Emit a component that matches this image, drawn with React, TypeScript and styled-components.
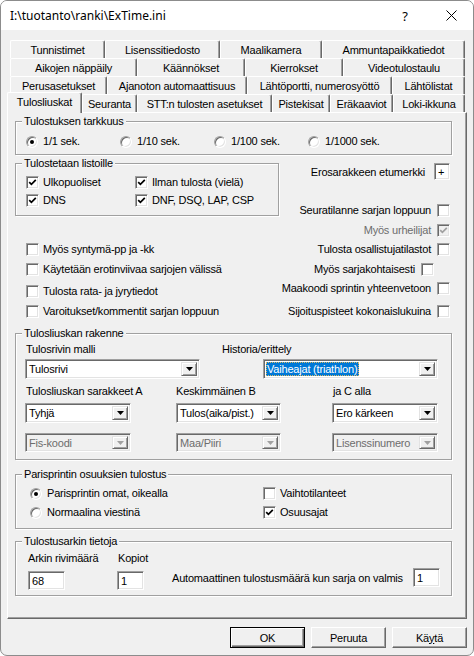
import React from "react";
import styled, { createGlobalStyle } from "styled-components";

const GlobalStyle = createGlobalStyle`
  html, body { margin: 0; padding: 0; background: #ffffff; }
  body {
    font-family: "Liberation Sans", Arial, sans-serif;
    font-size: 11px;
    letter-spacing: -0.2px;
    color: #000;
  }
  * { box-sizing: border-box; }
`;

const Window = styled.div`
  width: 474px;
  height: 656px;
  border: 1px solid #8c8c8c;
  border-radius: 7px;
  overflow: hidden;
  display: flex;
  flex-direction: column;
  background: #f0f0f0;
`;

const TitleBar = styled.div`
  height: 29px;
  flex: none;
  background: #ffffff;
  display: flex;
  align-items: center;
  padding-left: 9px;
  font-family: "Noto Sans", "Liberation Sans", sans-serif;
  font-size: 12px;
  letter-spacing: 0;
`;

const TitleText = styled.div`
  flex: 1;
  white-space: nowrap;
`;

const CaptionButton = styled.div<{ $w: number }>`
  width: ${(p) => p.$w}px;
  height: 29px;
  display: flex;
  align-items: center;
  justify-content: center;
  font-size: 13px;
`;

const Body = styled.div`
  flex: 1;
  display: flex;
  flex-direction: column;
  padding: 10px 6px 0 6px;
`;

const TabRows = styled.div`
  display: flex;
  flex-direction: column;
`;

const TabRow = styled.div<{ $offset: number }>`
  display: flex;
  height: 18px;
  align-items: flex-end;
  margin-left: ${(p) => p.$offset}px;
`;

const Tab = styled.div<{ $w: number; $active?: boolean }>`
  flex: none;
  width: ${(p) => p.$w}px;
  height: ${(p) => (p.$active ? 21 : 18)}px;
  margin-bottom: ${(p) => (p.$active ? -1 : 0)}px;
  padding-bottom: ${(p) => (p.$active ? 2 : 0)}px;
  position: relative;
  z-index: ${(p) => (p.$active ? 2 : 1)};
  background: #f0f0f0;
  border-top: 1px solid #ffffff;
  border-left: 1px solid #ffffff;
  border-right: 1px solid #696969;
  border-radius: 2px 2px 0 0;
  box-shadow: inset -1px 0 0 #a0a0a0;
  display: flex;
  align-items: center;
  justify-content: center;
  white-space: nowrap;
`;

const Panel = styled.div`
  height: 507px;
  flex: none;
  border: 1px solid;
  border-color: #ffffff #696969 #696969 #ffffff;
  box-shadow: inset -1px -1px 0 #a0a0a0;
  padding: 8px 14px 0 7px;
  display: flex;
  flex-direction: column;
  position: relative;
  z-index: 1;
`;

const Group = styled.div<{ $h: number; $w?: number; $mt?: number; $pt: number; $pl: number }>`
  position: relative;
  flex: none;
  height: ${(p) => p.$h}px;
  width: ${(p) => (p.$w ? `${p.$w}px` : "auto")};
  margin-top: ${(p) => p.$mt ?? 0}px;
  border: 1px solid #a0a0a0;
  box-shadow: inset 1px 1px 0 #ffffff, 1px 1px 0 #ffffff;
  padding: ${(p) => p.$pt}px 0 0 ${(p) => p.$pl}px;
`;

const Legend = styled.span`
  position: absolute;
  top: -7px;
  left: 6px;
  padding: 0 2px;
  line-height: 13px;
  background: #f0f0f0;
  white-space: nowrap;
`;

const Row = styled.div<{ $mt?: number; $gap?: number }>`
  display: flex;
  align-items: center;
  margin-top: ${(p) => p.$mt ?? 0}px;
  gap: ${(p) => p.$gap ?? 0}px;
`;

const Item = styled.label<{ $w?: number; $mt?: number; $mr?: number; $disabled?: boolean }>`
  display: flex;
  align-items: center;
  height: 13px;
  flex: none;
  width: ${(p) => (p.$w ? `${p.$w}px` : "auto")};
  margin-top: ${(p) => p.$mt ?? 0}px;
  margin-right: ${(p) => p.$mr ?? 0}px;
  white-space: nowrap;
  line-height: 13px;
  color: ${(p) => (p.$disabled ? "#6d6d6d" : "#000")};
`;

const BoxLeft = styled.span<{ $gap: number }>`
  margin-right: ${(p) => p.$gap}px;
  display: flex;
`;

const BoxRight = styled.span`
  margin-left: 6px;
  display: flex;
`;

const CheckBox = styled.span<{ $disabled?: boolean }>`
  width: 13px;
  height: 13px;
  flex: none;
  border: 1px solid;
  border-color: #a0a0a0 #ffffff #ffffff #a0a0a0;
  box-shadow: inset 1px 1px 0 #696969, inset -1px -1px 0 #e3e3e3;
  background: ${(p) => (p.$disabled ? "#f0f0f0" : "#ffffff")};
  display: flex;
  align-items: center;
  justify-content: center;
`;

const RadioCircle = styled.span`
  width: 12px;
  height: 12px;
  flex: none;
  border-radius: 50%;
  border: 1px solid;
  border-color: #a0a0a0 #ffffff #ffffff #a0a0a0;
  box-shadow: inset 1px 1px 0 #696969, inset -1px -1px 0 #e3e3e3;
  background: #ffffff;
  display: flex;
  align-items: center;
  justify-content: center;
`;

const Dot = styled.span`
  width: 4px;
  height: 4px;
  border-radius: 50%;
  background: #000;
`;

const Check: React.FC<{ checked?: boolean; disabled?: boolean }> = ({ checked, disabled }) => (
  <CheckBox $disabled={disabled}>
    {checked && (
      <svg width="9" height="9" viewBox="0 0 9 9">
        <polyline
          points="1.2,4.2 3.4,6.4 7.8,1.8"
          fill="none"
          stroke={disabled ? "#a0a0a0" : "#000"}
          strokeWidth="1.7"
        />
      </svg>
    )}
  </CheckBox>
);

const Radio: React.FC<{ checked?: boolean }> = ({ checked }) => (
  <RadioCircle>{checked && <Dot />}</RadioCircle>
);

const Columns = styled.div<{ $mt: number }>`
  display: flex;
  margin-top: ${(p) => p.$mt}px;
`;

const LeftCol = styled.div`
  width: 264px;
  flex: none;
  display: flex;
  flex-direction: column;
`;

const LeftList = styled.div`
  display: flex;
  flex-direction: column;
  padding-left: 11px;
`;

const RightCol = styled.div`
  flex: 1;
  display: flex;
  flex-direction: column;
  align-items: flex-end;
  padding-right: 2px;
`;

const EroRow = styled.div`
  display: flex;
  align-items: center;
  height: 17px;
  gap: 9px;
  white-space: nowrap;
`;

const TextBox = styled.div<{ $w: number; $h: number }>`
  width: ${(p) => p.$w}px;
  height: ${(p) => p.$h}px;
  flex: none;
  border: 1px solid;
  border-color: #a0a0a0 #ffffff #ffffff #a0a0a0;
  box-shadow: inset 1px 1px 0 #696969, inset -1px -1px 0 #e3e3e3;
  background: #ffffff;
  display: flex;
  align-items: center;
  padding-left: 3px;
  white-space: nowrap;
`;

const GridRow = styled.div<{ $cols: string; $mt?: number; $pl?: number }>`
  display: grid;
  grid-template-columns: ${(p) => p.$cols};
  margin-top: ${(p) => p.$mt ?? 0}px;
  padding-left: ${(p) => p.$pl ?? 0}px;
  align-items: center;
`;

const FieldLabel = styled.div`
  line-height: 13px;
  height: 13px;
  white-space: nowrap;
`;

const ComboBox = styled.div<{ $w: number; $h: number; $disabled?: boolean }>`
  width: ${(p) => p.$w}px;
  height: ${(p) => p.$h}px;
  border: 1px solid;
  border-color: #a0a0a0 #ffffff #ffffff #a0a0a0;
  box-shadow: inset 1px 1px 0 #696969, inset -1px -1px 0 #e3e3e3;
  background: ${(p) => (p.$disabled ? "#f0f0f0" : "#ffffff")};
  color: ${(p) => (p.$disabled ? "#6d6d6d" : "#000")};
  display: flex;
  align-items: stretch;
  padding: 2px;
`;

const ComboText = styled.div`
  flex: 1;
  display: flex;
  align-items: center;
  padding-left: 1px;
  white-space: nowrap;
  overflow: hidden;
`;

const Selected = styled.span`
  display: flex;
  align-items: center;
  height: 100%;
  margin-left: -1px;
  padding: 0 2px 0 1px;
  background: #0078d7;
  color: #ffffff;
  outline: 1px dotted #d8b864;
  outline-offset: -1px;
`;

const DropButton = styled.div`
  width: 16px;
  flex: none;
  background: #f0f0f0;
  border: 1px solid;
  border-color: #e3e3e3 #696969 #696969 #e3e3e3;
  box-shadow: inset 1px 1px 0 #ffffff, inset -1px -1px 0 #a0a0a0;
  display: flex;
  align-items: center;
  justify-content: center;
`;

const Combo: React.FC<{ w: number; h?: number; text: string; disabled?: boolean; selected?: boolean }> = ({
  w,
  h = 20,
  text,
  disabled,
  selected,
}) => (
  <ComboBox $w={w} $h={h} $disabled={disabled}>
    <ComboText>{selected ? <Selected>{text}</Selected> : text}</ComboText>
    <DropButton>
      <svg width="7" height="4" viewBox="0 0 7 4">
        <polygon points="0,0 7,0 3.5,4" fill={disabled ? "#a0a0a0" : "#000"} />
      </svg>
    </DropButton>
  </ComboBox>
);

const TwoColGrid = styled.div`
  display: grid;
  grid-template-columns: 233px auto;
  row-gap: 6px;
`;

const SheetRow = styled.div`
  display: flex;
  align-items: flex-start;
`;

const SheetCol = styled.div<{ $w: number }>`
  width: ${(p) => p.$w}px;
  flex: none;
  display: flex;
  flex-direction: column;
`;

const SheetLabel = styled.div<{ $ml?: number }>`
  line-height: 13px;
  height: 13px;
  margin-left: ${(p) => p.$ml ?? 0}px;
  margin-bottom: 6px;
  white-space: nowrap;
`;

const AutoRow = styled.div`
  width: 268px;
  margin-top: 16px;
  height: 19px;
  display: flex;
  align-items: center;
  justify-content: space-between;
  white-space: nowrap;
`;

const ButtonBar = styled.div`
  display: flex;
  justify-content: flex-end;
  gap: 6px;
  margin-top: 8px;
`;

const Button = styled.div<{ $default?: boolean }>`
  width: 75px;
  height: 21px;
  background: #f0f0f0;
  border: 1px solid;
  border-color: ${(p) => (p.$default ? "#000 #000 #000 #000" : "#ffffff #696969 #696969 #ffffff")};
  box-shadow: ${(p) =>
    p.$default
      ? "inset 1px 1px 0 #ffffff, inset -1px -1px 0 #696969, inset -2px -2px 0 #a0a0a0"
      : "inset -1px -1px 0 #a0a0a0"};
  display: flex;
  align-items: center;
  justify-content: center;
  white-space: nowrap;
`;

type TabDef = { label: string; w: number; active?: boolean };
const tabRows: { offset: number; tabs: TabDef[] }[] = [
  {
    offset: 3,
    tabs: [
      { label: "Tunnistimet", w: 95 },
      { label: "Lisenssitiedosto", w: 115 },
      { label: "Maalikamera", w: 102 },
      { label: "Ammuntapaikkatiedot", w: 143 },
    ],
  },
  {
    offset: 3,
    tabs: [
      { label: "Aikojen näppäily", w: 127 },
      { label: "Käännökset", w: 108 },
      { label: "Kierrokset", w: 98 },
      { label: "Videotulostaulu", w: 122 },
    ],
  },
  {
    offset: 3,
    tabs: [
      { label: "Perusasetukset", w: 97 },
      { label: "Ajanoton automaattisuus", w: 140 },
      { label: "Lähtöportti, numerosyöttö", w: 145 },
      { label: "Lähtölistat", w: 73 },
    ],
  },
  {
    offset: 0,
    tabs: [
      { label: "Tulosliuskat", w: 75, active: true },
      { label: "Seuranta", w: 55 },
      { label: "STT:n tulosten asetukset", w: 135 },
      { label: "Pistekisat", w: 58 },
      { label: "Eräkaaviot", w: 63 },
      { label: "Loki-ikkuna", w: 72 },
    ],
  },
];

const leftChecks = [
  { label: "Myös syntymä-pp ja -kk", mt: 27 },
  { label: "Käytetään erotinviivaa sarjojen välissä", mt: 7 },
  { label: "Tulosta rata- ja jyrytiedot", mt: 9 },
  { label: "Varoitukset/kommentit sarjan loppuun", mt: 7 },
];

const rightChecks = [
  { label: "Seuratilanne sarjan loppuun", mt: 24, mr: 0, checked: false, disabled: false },
  { label: "Myös urheilijat", mt: 7, mr: 0, checked: true, disabled: true },
  { label: "Tulosta osallistujatilastot", mt: 6, mr: 0, checked: false, disabled: false },
  { label: "Myös sarjakohtaisesti", mt: 7, mr: 16, checked: false, disabled: false },
  { label: "Maakoodi sprintin yhteenvetoon", mt: 6, mr: 0, checked: false, disabled: false },
  { label: "Sijoituspisteet kokonaislukuina", mt: 10, mr: 0, checked: false, disabled: false },
];

export default function App() {
  return (
    <>
      <GlobalStyle />
      <Window>
        <TitleBar>
          <TitleText>{"I:\\tuotanto\\ranki\\ExTime.ini"}</TitleText>
          <CaptionButton $w={50}>?</CaptionButton>
          <CaptionButton $w={43}>
            <svg width="11" height="11" viewBox="0 0 11 11">
              <path d="M0.5 0.5 L10.5 10.5 M10.5 0.5 L0.5 10.5" stroke="#000" strokeWidth="1" />
            </svg>
          </CaptionButton>
        </TitleBar>
        <Body>
          <TabRows>
            {tabRows.map((row, ri) => (
              <TabRow key={ri} $offset={row.offset}>
                {row.tabs.map((t) => (
                  <Tab key={t.label} $w={t.w} $active={t.active}>
                    {t.label}
                  </Tab>
                ))}
              </TabRow>
            ))}
          </TabRows>
          <Panel>
            <Group $h={34} $pt={13} $pl={10}>
              <Legend>Tulostuksen tarkkuus</Legend>
              <Row>
                {["1/1 sek.", "1/10 sek.", "1/100 sek.", "1/1000 sek."].map((t, i) => (
                  <Item key={t} $w={94}>
                    <BoxLeft $gap={5}>
                      <Radio checked={i === 0} />
                    </BoxLeft>
                    {t}
                  </Item>
                ))}
              </Row>
            </Group>

            <Columns $mt={8}>
              <LeftCol>
                <Group $h={53} $w={264} $pt={12} $pl={10}>
                  <Legend>Tulostetaan listoille</Legend>
                  <Row>
                    <Item $w={109}>
                      <BoxLeft $gap={4}>
                        <Check checked />
                      </BoxLeft>
                      Ulkopuoliset
                    </Item>
                    <Item>
                      <BoxLeft $gap={4}>
                        <Check checked />
                      </BoxLeft>
                      Ilman tulosta (vielä)
                    </Item>
                  </Row>
                  <Row $mt={5}>
                    <Item $w={109}>
                      <BoxLeft $gap={4}>
                        <Check checked />
                      </BoxLeft>
                      DNS
                    </Item>
                    <Item>
                      <BoxLeft $gap={4}>
                        <Check checked />
                      </BoxLeft>
                      DNF, DSQ, LAP, CSP
                    </Item>
                  </Row>
                </Group>
                <LeftList>
                  {leftChecks.map((c) => (
                    <Item key={c.label} $mt={c.mt}>
                      <BoxLeft $gap={4}>
                        <Check />
                      </BoxLeft>
                      {c.label}
                    </Item>
                  ))}
                </LeftList>
              </LeftCol>
              <RightCol>
                <EroRow>
                  Erosarakkeen etumerkki
                  <TextBox $w={16} $h={17}>+</TextBox>
                </EroRow>
                {rightChecks.map((c) => (
                  <Item key={c.label} $mt={c.mt} $mr={c.mr} $disabled={c.disabled}>
                    {c.label}
                    <BoxRight>
                      <Check checked={c.checked} disabled={c.disabled} />
                    </BoxRight>
                  </Item>
                ))}
              </RightCol>
            </Columns>

            <Group $h={127} $mt={15} $pt={9} $pl={9}>
              <Legend>Tulosliuskan rakenne</Legend>
              <GridRow $cols="196px auto" $pl={1}>
                <FieldLabel>Tulosrivin malli</FieldLabel>
                <FieldLabel>Historia/erittely</FieldLabel>
              </GridRow>
              <GridRow $cols="238px auto" $mt={3}>
                <Combo w={175} text="Tulosrivi" />
                <Combo w={175} text="Vaiheajat (triathlon)" selected />
              </GridRow>
              <GridRow $cols="150px 157px auto" $mt={6} $pl={1}>
                <FieldLabel>Tulosliuskan sarakkeet A</FieldLabel>
                <FieldLabel>Keskimmäinen B</FieldLabel>
                <FieldLabel>ja C alla</FieldLabel>
              </GridRow>
              <GridRow $cols="151px 156px auto" $mt={5}>
                <Combo w={106} text="Tyhjä" />
                <Combo w={105} text="Tulos(aika/pist.)" />
                <Combo w={106} text="Ero kärkeen" />
              </GridRow>
              <GridRow $cols="151px 156px auto" $mt={10}>
                <Combo w={106} h={19} text="Fis-koodi" disabled />
                <Combo w={105} h={19} text="Maa/Piiri" disabled />
                <Combo w={106} h={19} text="Lisenssinumero" disabled />
              </GridRow>
            </Group>

            <Group $h={55} $mt={14} $pt={12} $pl={14}>
              <Legend>Parisprintin osuuksien tulostus</Legend>
              <TwoColGrid>
                <Item>
                  <BoxLeft $gap={5}>
                    <Radio checked />
                  </BoxLeft>
                  Parisprintin omat, oikealla
                </Item>
                <Item>
                  <BoxLeft $gap={4}>
                    <Check />
                  </BoxLeft>
                  Vaihtotilanteet
                </Item>
                <Item>
                  <BoxLeft $gap={5}>
                    <Radio />
                  </BoxLeft>
                  Normaalina viestinä
                </Item>
                <Item>
                  <BoxLeft $gap={4}>
                    <Check checked />
                  </BoxLeft>
                  Osuusajat
                </Item>
              </TwoColGrid>
            </Group>

            <Group $h={55} $mt={12} $pt={10} $pl={12}>
              <Legend>Tulostusarkin tietoja</Legend>
              <SheetRow>
                <SheetCol $w={89}>
                  <SheetLabel>Arkin rivimäärä</SheetLabel>
                  <TextBox $w={37} $h={19}>68</TextBox>
                </SheetCol>
                <SheetCol $w={55}>
                  <SheetLabel $ml={1}>Kopiot</SheetLabel>
                  <TextBox $w={27} $h={19}>1</TextBox>
                </SheetCol>
                <AutoRow>
                  Automaattinen tulostusmäärä kun sarja on valmis
                  <TextBox $w={27} $h={19}>1</TextBox>
                </AutoRow>
              </SheetRow>
            </Group>
          </Panel>
          <ButtonBar>
            <Button $default>OK</Button>
            <Button>Peruuta</Button>
            <Button>
              <span>
                Kä<u>y</u>tä
              </span>
            </Button>
          </ButtonBar>
        </Body>
      </Window>
    </>
  );
}
